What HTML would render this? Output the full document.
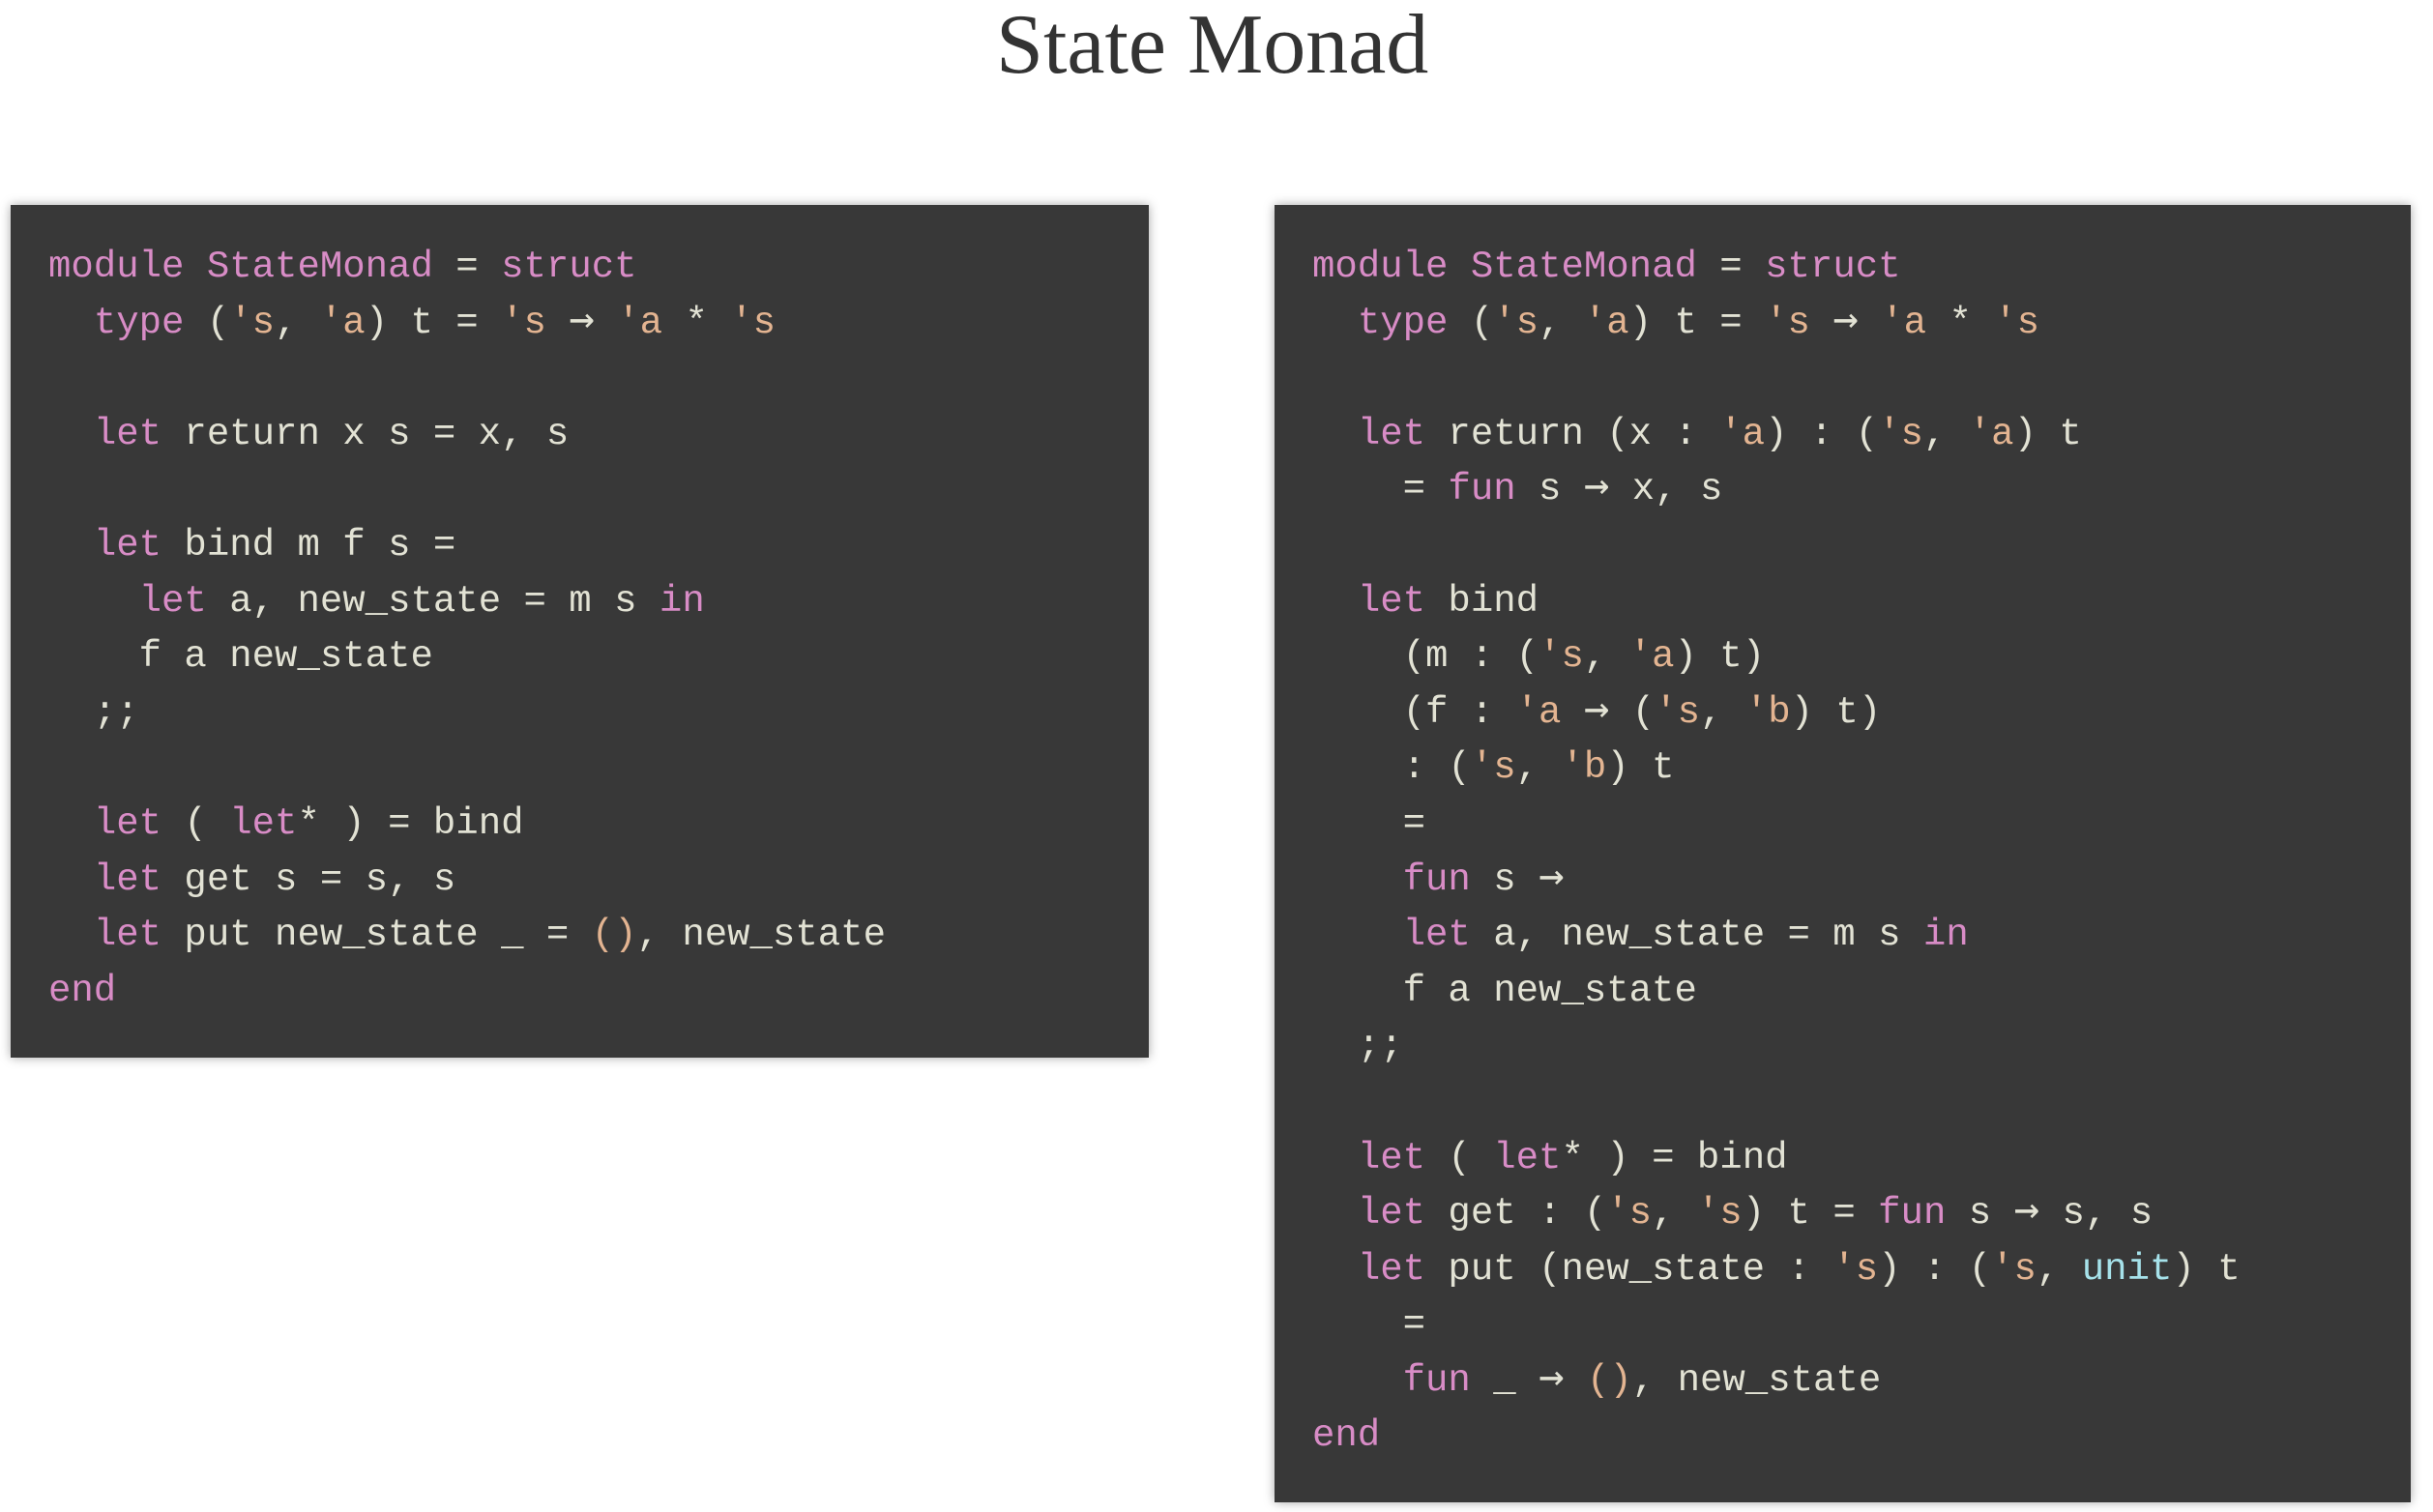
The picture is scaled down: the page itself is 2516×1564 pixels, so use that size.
<!DOCTYPE html>
<html><head><meta charset="utf-8"><style>
html,body{margin:0;padding:0;background:#fff;width:2516px;height:1564px;overflow:hidden;position:relative}
.t{position:absolute;left:1030px;top:-3px;font:400 88px "Liberation Serif",serif;color:#333;white-space:nowrap;line-height:100px}
.p{position:absolute;top:212px;background:#383838;box-shadow:0 0 10px rgba(0,0,0,.35);}
pre{margin:0;padding:36px 0 0 39px;font:400 39px/57.6px "Liberation Mono","DejaVu Sans Mono",monospace;color:#e2e2d4;white-space:pre}
.k{color:#d88cc6}.s{color:#e3b491}.c{color:#a6e2ea}
.a{font-family:"DejaVu Sans Mono",monospace;font-size:44px;line-height:0}
</style></head><body>
<div class="t">State Monad</div>
<div class="p" style="left:11px;width:1177px;height:882px"><pre><span class="k">module</span> <span class="k">StateMonad</span> = <span class="k">struct</span>
  <span class="k">type</span> (<span class="s">'s</span>, <span class="s">'a</span>) t = <span class="s">'s</span> <span class="a">→</span> <span class="s">'a</span> * <span class="s">'s</span>

  <span class="k">let</span> return x s = x, s

  <span class="k">let</span> bind m f s =
    <span class="k">let</span> a, new_state = m s <span class="k">in</span>
    f a new_state
  ;;

  <span class="k">let</span> ( <span class="k">let</span>* ) = bind
  <span class="k">let</span> get s = s, s
  <span class="k">let</span> put new_state _ = <span class="s">()</span>, new_state
<span class="k">end</span></pre></div>
<div class="p" style="left:1318px;width:1175px;height:1342px"><pre><span class="k">module</span> <span class="k">StateMonad</span> = <span class="k">struct</span>
  <span class="k">type</span> (<span class="s">'s</span>, <span class="s">'a</span>) t = <span class="s">'s</span> <span class="a">→</span> <span class="s">'a</span> * <span class="s">'s</span>

  <span class="k">let</span> return (x : <span class="s">'a</span>) : (<span class="s">'s</span>, <span class="s">'a</span>) t
    = <span class="k">fun</span> s <span class="a">→</span> x, s

  <span class="k">let</span> bind
    (m : (<span class="s">'s</span>, <span class="s">'a</span>) t)
    (f : <span class="s">'a</span> <span class="a">→</span> (<span class="s">'s</span>, <span class="s">'b</span>) t)
    : (<span class="s">'s</span>, <span class="s">'b</span>) t
    =
    <span class="k">fun</span> s <span class="a">→</span>
    <span class="k">let</span> a, new_state = m s <span class="k">in</span>
    f a new_state
  ;;

  <span class="k">let</span> ( <span class="k">let</span>* ) = bind
  <span class="k">let</span> get : (<span class="s">'s</span>, <span class="s">'s</span>) t = <span class="k">fun</span> s <span class="a">→</span> s, s
  <span class="k">let</span> put (new_state : <span class="s">'s</span>) : (<span class="s">'s</span>, <span class="c">unit</span>) t
    =
    <span class="k">fun</span> _ <span class="a">→</span> <span class="s">()</span>, new_state
<span class="k">end</span></pre></div>
</body></html>
